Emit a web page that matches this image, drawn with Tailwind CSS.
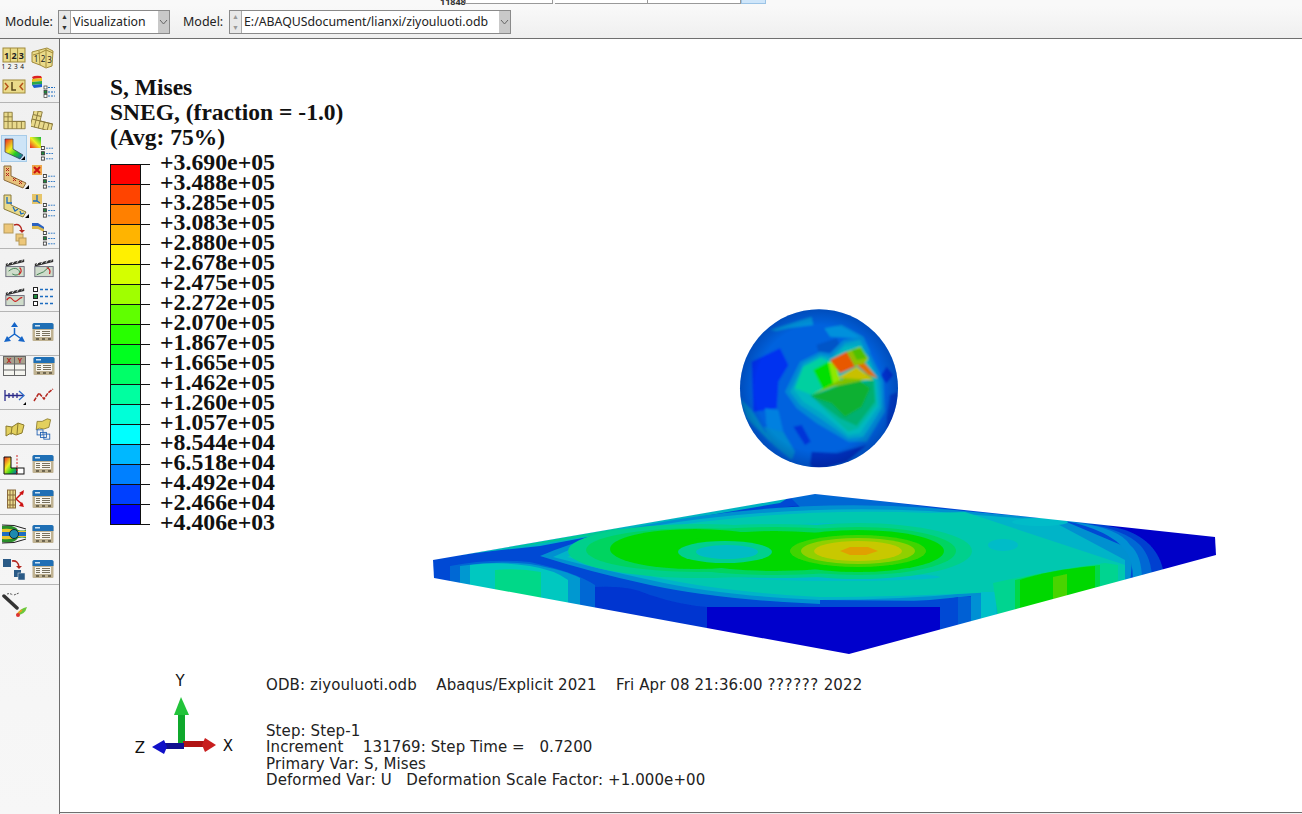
<!DOCTYPE html>
<html lang="en">
<head>
  <meta charset="UTF-8">
  <title>Abaqus/CAE Visualization</title>
  <script src="https://cdn.jsdelivr.net/npm/@tailwindcss/browser@4"></script>
</head>
<body class="w-[1302px] h-[814px] overflow-hidden bg-[#f0f0f0] flex flex-col font-['Noto_Sans',sans-serif]">

  <!-- shared icons -->
  <svg class="hidden">
    <symbol id="table" viewBox="0 2 22 18">
      <rect x="0.5" y="3" width="21" height="17" rx="1" fill="#bfb292"/>
      <path d="M0.5 8V3.5q0-1.500 1.500-1.500h18q1.500 0 1.500 1.500V8z" fill="#1f6fb5"/>
      <rect x="3" y="4" width="5" height="1.500" fill="#cfe3f3"/>
      <rect x="3" y="9" width="16" height="7" fill="#f7f5ee"/>
      <path d="M4 10.500h4M10 10.500h8M4 12.500h4M10 12.500h8M4 14.500h4M10 14.500h8" stroke="#77705c"/>
      <path d="M4 18h3M10 18h3M16 18h3" stroke="#6e6650" stroke-width="2"/>
    </symbol>
    <symbol id="list" viewBox="0 0 14 17">
      <rect x="0.500" y="0.500" width="3.500" height="3.500" fill="#fff" stroke="#333"/>
      <rect x="0.500" y="6.500" width="3.500" height="3.500" fill="#1f8a3c" stroke="#333"/>
      <rect x="0.500" y="12.500" width="3.500" height="3.500" fill="#fff" stroke="#333"/>
      <path d="M6 2.500h8M6 8.500h8M6 14.500h8" stroke="#1c6cc0" stroke-dasharray="2 1"/>
    </symbol>
    <symbol id="mesh-l" viewBox="0 0 25 20">
      <path d="M1 1h9v10h14v8H1z" fill="#e9da8c" stroke="#8a7a3c"/>
      <path d="M5.500 1v18M1 6h9M1 11h23M10 11v8M15 11v8M20 11v8" stroke="#8a7a3c" fill="none"/>
    </symbol>
    <symbol id="film" viewBox="0 0 24 22">
      <path d="M2 7l20-5v3L2 10z" fill="#333"/>
      <path d="M4 8l2-3M9 7l2-3M14 6l2-3M19 4l2-2" stroke="#fff"/>
      <rect x="2" y="10" width="20" height="11" fill="#cfdccb" stroke="#667"/>
    </symbol>
  </svg>

  <!-- strip of the window above -->
  <div class="h-[6px] bg-[#f9f9f9] relative overflow-hidden shrink-0">
    <div class="absolute left-[440px] -top-[1px] h-[5px] w-[326px] flex items-end">
      <span class="w-[25px] text-[9px] leading-[5px] font-bold text-[#333]">11848</span>
      <span class="w-[88px] h-[5px] border-x border-b border-[#999] bg-white"></span>
      <span class="w-[2px]"></span>
      <span class="w-[93px] h-[5px] border-r border-b border-[#999] bg-white"></span>
      <span class="w-[93px] h-[5px] border-r border-b border-[#999] bg-white"></span>
      <span class="flex-1 h-[5px] bg-[#cfe6fa] border border-t-0 border-[#9cc4e6]"></span>
    </div>
  </div>

  <!-- module / model bar -->
  <div class="h-[33px] shrink-0 flex items-center pl-[5px] text-[12.500px] text-[#222] bg-gradient-to-b from-[#f9f9f9] to-[#efefef] border-b border-[#6f6f6f]">
    <span class="mr-[5px] w-[48px]">Module:</span>
    <div class="w-[112px] h-[24px] flex items-center bg-white border border-[#8a8a8a] text-[12.300px]">
      <span class="w-[12px] h-full flex flex-col text-[7px] leading-[11px] text-center text-[#333] bg-[#e8e8e8] border-r border-[#aaa]"><i class="not-italic">▲</i><i class="not-italic">▼</i></span>
      <span class="flex-1 pl-[2px]">Visualization</span>
      <span class="w-[11px] h-full bg-[#c9c9c9] flex items-center justify-center">
        <svg width="9" height="6" viewBox="0 0 9 6"><path d="M1 1l3.500 4L8 1" fill="none" stroke="#666"/></svg>
      </span>
    </div>
    <span class="ml-[13px] mr-[4px] w-[42px]">Model:</span>
    <div class="w-[282px] h-[24px] flex items-center bg-white border border-[#8a8a8a] text-[12.300px]">
      <span class="w-[12px] h-full flex flex-col text-[7px] leading-[11px] text-center text-[#999] bg-[#e8e8e8] border-r border-[#aaa]"><i class="not-italic">▲</i><i class="not-italic">▼</i></span>
      <span class="flex-1 pl-[2px]">E:/ABAQUSdocument/lianxi/ziyouluoti.odb</span>
      <span class="w-[11px] h-full bg-[#c9c9c9] flex items-center justify-center">
        <svg width="9" height="6" viewBox="0 0 9 6"><path d="M1 1l3.500 4L8 1" fill="none" stroke="#666"/></svg>
      </span>
    </div>
  </div>

  <div class="flex-1 flex min-h-0">
    <!-- toolbox -->
    <aside class="w-[60px] shrink-0 bg-gradient-to-b from-[#f0f0f0] to-[#f7f7f7] border-r border-[#6f6f6f]">
      <div class="pt-[4px] h-[64px] border-b border-[#b5b5b5]">
        <div class="flex h-[29px] items-center pl-[2px] gap-[5px]">
          <svg width="24" height="22" viewBox="0 0 24 22">
            <rect x="1" y="1" width="22" height="14" fill="#eadb8a" stroke="#a08a3a"/>
            <path d="M8.300 1v14M15.600 1v14" stroke="#a08a3a"/>
            <text x="4.600" y="11.500" font-size="9" font-weight="700" text-anchor="middle" fill="#222">1</text>
            <text x="12" y="11.500" font-size="9" font-weight="700" text-anchor="middle" fill="#222">2</text>
            <text x="19.400" y="11.500" font-size="9" font-weight="700" text-anchor="middle" fill="#222">3</text>
            <text x="12" y="21.500" font-size="6.500" text-anchor="middle" fill="#111" letter-spacing="2.500">1234</text>
          </svg>
          <svg width="23" height="22" viewBox="0 0 23 22">
            <path d="M1 5l15-4 6 3-1 15-6 2-6-3-8-3z" fill="#eadb8a" stroke="#a08a3a"/>
            <path d="M8 4l1 14M15 2l0 18M2 8l7-2 6-3 7 3" stroke="#a08a3a" fill="none"/>
            <text x="5" y="15" font-size="8" text-anchor="middle" fill="#222">1</text>
            <text x="12" y="15" font-size="8" text-anchor="middle" fill="#222">2</text>
            <text x="18.500" y="16" font-size="8" text-anchor="middle" fill="#222">3</text>
          </svg>
        </div>
        <div class="flex h-[29px] items-center pl-[2px] gap-[5px]">
          <svg width="24" height="17" viewBox="0 0 24 17">
            <rect x="1" y="2" width="22" height="13" fill="#eadb8a" stroke="#a08a3a"/>
            <path d="M3 5l3 3.500-3 3.500M21 5l-3 3.500 3 3.500" fill="none" stroke="#b5521c" stroke-width="1.500"/>
            <path d="M10 4v8h4" fill="none" stroke="#5a4a1c" stroke-width="1.500"/>
          </svg>
          <svg width="24" height="23" viewBox="0 0 24 23">
            <path d="M1 2q3-2 9-1l1 2-9 1z" fill="#d22"/>
            <path d="M1 4l10-1v3L1 7z" fill="#e8c020"/>
            <path d="M1 7l10-1v3L1 10z" fill="#2aa84a"/>
            <path d="M1 10l10-1v3L3 13z" fill="#1c5fd0"/>
            <rect x="13" y="11" width="3" height="3" fill="#fff" stroke="#333" stroke-width=".7"/>
            <rect x="13" y="15.500" width="3" height="3" fill="#1f8a3c" stroke="#333" stroke-width=".7"/>
            <rect x="13" y="19.500" width="3" height="3" fill="#fff" stroke="#333" stroke-width=".7"/>
            <path d="M17 12.500h7M17 17h7M17 21h7" stroke="#1c6cc0" stroke-dasharray="2 1"/>
          </svg>
        </div>
      </div>

      <div class="pt-[3px] h-[146px] border-b border-[#b5b5b5]">
        <div class="flex h-[28.500px] items-center pl-[3px] gap-[5px]">
          <svg width="23" height="19" viewBox="0 0 25 20"><use href="#mesh-l"/></svg>
          <svg width="23" height="19" viewBox="0 0 25 20"><g transform="rotate(14 12 10)"><use href="#mesh-l"/></g></svg>
        </div>
        <div class="flex h-[28.500px] items-center pl-[1px] gap-[3px]">
          <div class="w-[26px] h-[27px] bg-[#cde4f7] border border-[#a6cbe8] relative">
            <svg width="24" height="25" viewBox="0 0 24 25">
              <defs><linearGradient id="cont" x1="0" y1="0" x2="1" y2="1"><stop offset="0" stop-color="#e22"/><stop offset=".4" stop-color="#ee2"/><stop offset=".65" stop-color="#2c2"/><stop offset="1" stop-color="#15c"/></linearGradient></defs>
              <path d="M3 3h8v10l10 6-3 4L3 16z" fill="url(#cont)" stroke="#335" stroke-width=".7"/>
            </svg>
            <span class="absolute right-[1px] bottom-[1px] w-0 h-0 border-l-[4px] border-l-transparent border-b-[4px] border-b-black"></span>
          </div>
          <div class="relative w-[24px] h-[24px]">
            <svg class="absolute left-0 top-0" width="11" height="11" viewBox="0 0 11 11">
              <defs><linearGradient id="cont2" x1="0" y1="1" x2="1" y2="0"><stop offset="0" stop-color="#e22"/><stop offset=".5" stop-color="#ee2"/><stop offset="1" stop-color="#1b3"/></linearGradient></defs>
              <rect width="11" height="11" fill="url(#cont2)"/>
            </svg>
            <svg class="absolute left-[10px] top-[9px]" width="14" height="15" viewBox="0 0 14 17"><use href="#list"/></svg>
          </div>
        </div>
        <div class="flex h-[28.500px] items-center pl-[3px] gap-[3px]">
          <div class="relative w-[26px] h-[24px]">
            <svg width="26" height="24" viewBox="0 0 26 24">
              <path d="M1 1h7v10l15 7-3 5L1 15z" fill="#e7c27c" stroke="#8a6a3c"/>
              <path d="M3 3l3 3M6 3L3 6M3 8l3 3M6 8l-3 3M10 13l3 3M13 13l-3 3M16 16l3 3M19 16l-3 3" stroke="#b3261e"/>
            </svg>
            <span class="absolute right-0 bottom-0 w-0 h-0 border-l-[4px] border-l-transparent border-b-[4px] border-b-black"></span>
          </div>
          <div class="relative w-[24px] h-[24px]">
            <svg class="absolute left-0 top-0" width="10" height="10" viewBox="0 0 10 10"><rect width="10" height="10" fill="#eda64a"/><path d="M2 2l6 6M8 2L2 8" stroke="#c11" stroke-width="2"/></svg>
            <svg class="absolute left-[10px] top-[9px]" width="14" height="15" viewBox="0 0 14 17"><use href="#list"/></svg>
          </div>
        </div>
        <div class="flex h-[28.500px] items-center pl-[3px] gap-[3px]">
          <div class="relative w-[26px] h-[24px]">
            <svg width="26" height="24" viewBox="0 0 26 24">
              <path d="M1 1h7v10l15 7-3 5L1 15z" fill="#e9da8c" stroke="#8a7a3c"/>
              <path d="M4 3v6h5M10 13l2 4 3-2M17 17l1 3 3-1" fill="none" stroke="#1c6cc0" stroke-width="1.300"/>
            </svg>
            <span class="absolute right-0 bottom-0 w-0 h-0 border-l-[4px] border-l-transparent border-b-[4px] border-b-black"></span>
          </div>
          <div class="relative w-[24px] h-[24px]">
            <svg class="absolute left-0 top-0" width="10" height="10" viewBox="0 0 10 10"><rect width="10" height="10" fill="#e6c56a"/><path d="M5 1v6H1M5 7l3 2" fill="none" stroke="#1c6cc0" stroke-width="1.300"/></svg>
            <svg class="absolute left-[10px] top-[9px]" width="14" height="15" viewBox="0 0 14 17"><use href="#list"/></svg>
          </div>
        </div>
        <div class="flex h-[28.500px] items-center pl-[3px] gap-[3px]">
          <svg width="26" height="24" viewBox="0 0 26 24">
            <rect x="1" y="2" width="9" height="9" fill="#edc77a" stroke="#b69a5a"/>
            <path d="M11 3q7-2 8 6" fill="none" stroke="#b3261e" stroke-width="1.500"/>
            <path d="M16 8h6l-3 3z" fill="#b3261e"/>
            <rect x="13" y="12" width="7" height="7" fill="#edc77a" stroke="#b69a5a"/>
            <rect x="16" y="16" width="7" height="7" fill="#edc77a" stroke="#b69a5a"/>
          </svg>
          <div class="relative w-[24px] h-[24px]">
            <svg class="absolute left-0 top-[1px]" width="13" height="10" viewBox="0 0 13 10"><path d="M0 0h6l6 4v3l-6-3H0z" fill="#2b62c0"/><path d="M0 3h6l6 3v3l-6-3H0z" fill="#d8b850"/></svg>
            <svg class="absolute left-[10px] top-[9px]" width="14" height="15" viewBox="0 0 14 17"><use href="#list"/></svg>
          </div>
        </div>
      </div>

      <div class="pt-[4px] h-[63px] border-b border-[#b5b5b5]">
        <div class="flex h-[29px] items-center pl-[4px] gap-[7px]">
          <svg width="22" height="21" viewBox="0 0 24 22">
            <use href="#film"/><path d="M5 15q6-5 10-2 4 3 0 6-3 1-6-1" fill="none" stroke="#3a7a4a"/><path d="M17 11q4 4-1 8" fill="none" stroke="#c22" stroke-width="1.300"/>
          </svg>
          <svg width="22" height="21" viewBox="0 0 24 22">
            <use href="#film"/><path d="M4 19q8-2 14-9" fill="none" stroke="#3a7a4a"/><path d="M15 11q5 2 3 7" fill="none" stroke="#c22" stroke-width="1.300"/>
          </svg>
        </div>
        <div class="flex h-[29px] items-center pl-[4px] gap-[7px]">
          <svg width="22" height="21" viewBox="0 0 24 22">
            <use href="#film"/><path d="M3 15q3-5 6-1t6 1 5-3" fill="none" stroke="#c22" stroke-width="1.300"/>
          </svg>
          <svg width="22" height="19" viewBox="0 0 22 19">
            <rect x=".5" y=".5" width="4" height="4" fill="#fff" stroke="#222"/>
            <rect x=".5" y="7.500" width="4" height="4" fill="#1f8a3c" stroke="#222"/>
            <rect x=".5" y="14.500" width="4" height="4" fill="#fff" stroke="#222"/>
            <path d="M7 2.500h15M7 9.500h15M7 16.500h15" stroke="#1c6cc0" stroke-width="1.500" stroke-dasharray="3 2"/>
          </svg>
        </div>
      </div>

      <div class="pt-[5px] h-[44px] border-b border-[#b5b5b5]">
        <div class="flex h-[29px] items-center pl-[4px] gap-[7px]">
          <svg width="21" height="21" viewBox="0 0 21 21" fill="#1565c8">
            <path d="M10.500 7v6M10.500 13l-7 5M10.500 13l7 5" stroke="#1565c8" stroke-width="1.500"/>
            <path d="M10.500 1l3.500 5h-7zM0 21l3-6 4 5zM21 21l-3-6-4 5z"/>
          </svg>
          <svg width="22" height="18"><use href="#table"/></svg>
        </div>
      </div>

      <div class="h-[54px] border-b border-[#b5b5b5]">
        <div class="flex h-[20px] items-center pl-[3px] gap-[7px]">
          <svg width="23" height="20" viewBox="0 0 23 20">
            <rect x=".5" y=".5" width="22" height="19" fill="#f5f5f0" stroke="#666"/>
            <rect x="1" y="1" width="21" height="7" fill="#a9a28e"/>
            <path d="M.5 8h22M.5 14h22M11.500 .5v19" stroke="#666"/>
            <text x="6" y="7" font-size="7" font-weight="700" text-anchor="middle" fill="#b3261e">X</text>
            <text x="17" y="7" font-size="7" font-weight="700" text-anchor="middle" fill="#b3261e">Y</text>
          </svg>
          <svg width="22" height="18"><use href="#table"/></svg>
        </div>
        <div class="flex h-[20px] mt-[9px] items-center pl-[4px] gap-[8px] relative">
          <svg width="21" height="13" viewBox="0 0 21 13">
            <path d="M1 1v11M1 6.500h18M5 4v5M9 4v5M13 4v5" stroke="#2a2a8a" fill="none" stroke-width="1.300"/>
            <path d="M15 2l5 4.500-5 4.500" fill="none" stroke="#2a6ac8" stroke-width="1.300"/>
          </svg>
          <svg width="21" height="15" viewBox="0 0 21 15">
            <path d="M1 13l5-8 5 6 4-6 5-4" fill="none" stroke="#b3261e" stroke-width="1.500" stroke-dasharray="4 1"/>
          </svg>
          <span class="absolute left-[23px] bottom-0 w-0 h-0 border-l-[3px] border-l-transparent border-b-[3px] border-b-black"></span>
        </div>
      </div>

      <div class="pt-[8px] h-[35px] border-b border-[#b5b5b5]">
        <div class="flex h-[22px] items-center pl-[5px] gap-[8px]">
          <svg width="20" height="15" viewBox="0 0 20 15"><path d="M1 4l6 1 6-4 6 2-2 8-6 2-5-2-5 3z" fill="#e3d05e" stroke="#8a7a2c"/><path d="M7 5l-1 8M13 1l-1 11" stroke="#8a7a2c"/></svg>
          <svg width="20" height="22" viewBox="0 0 20 26"><path d="M3 4l6 0 6-3 4 1-2 9-6 2-5-1-4 2z" fill="#e3d05e" stroke="#8a7a2c"/><rect x="3" y="14" width="7" height="6" fill="none" stroke="#1c5cb0"/><rect x="7" y="17" width="7" height="6" fill="none" stroke="#1c5cb0"/><rect x="11" y="19" width="7" height="6" fill="none" stroke="#1c5cb0"/></svg>
        </div>
      </div>

      <div class="h-[35px] pt-[4px] border-b border-[#b5b5b5] flex items-center pl-[3px] gap-[7px]">
        <svg width="22" height="21" viewBox="0 0 22 21">
          <defs><linearGradient id="cont3" x1="0" y1="0" x2="1" y2="1"><stop offset="0" stop-color="#e22"/><stop offset=".4" stop-color="#ee2"/><stop offset=".7" stop-color="#2c2"/><stop offset="1" stop-color="#15c"/></linearGradient></defs>
          <path d="M1 3h7v11h6v6H1z" fill="url(#cont3)" stroke="#111"/>
          <rect x="14" y="14" width="7" height="6" fill="#fff" stroke="#111"/>
          <path d="M14 1v19" stroke="#c22" stroke-dasharray="2 1.500"/>
        </svg>
        <svg width="22" height="18"><use href="#table"/></svg>
      </div>

      <div class="h-[35px] pt-[4px] border-b border-[#b5b5b5] flex items-center pl-[7px] gap-[7px]">
        <svg width="18" height="20" viewBox="0 0 18 20">
          <rect x="0.500" y="1" width="8" height="18" fill="#e9da8c" stroke="#8a6a3c"/>
          <path d="M3 1v18M6 1v18M.5 6h8M.5 11h8M.5 16h8" stroke="#8a6a3c"/>
          <path d="M9 10l7-7M9 10l7 6" stroke="#c11" stroke-width="1.500"/>
          <path d="M17 1l-1 5-4-2zM17 18l-5-1 3-4z" fill="#c11"/>
        </svg>
        <svg width="22" height="18"><use href="#table"/></svg>
      </div>

      <div class="h-[35px] pt-[4px] border-b border-[#b5b5b5] flex items-center pl-[2px] gap-[6px]">
        <svg width="24" height="20" viewBox="0 0 24 20">
          <path d="M0 2q12-2 16 4 4 1 8 0v8q-4-1-8 0-4 6-16 4z" fill="#2a8f2a"/>
          <path d="M0 5q10-1 14 2h10v6H14q-4 3-14 2z" fill="#e6c52e"/>
          <path d="M0 8h14v4H0zM14 8h10v4H14z" fill="#1c6cc0"/>
          <circle cx="12" cy="10" r="4.500" fill="#1c8ab0" stroke="#123"/>
          <path d="M0 1q12-1 24 4M0 19q12 1 24-4" fill="none" stroke="#222"/>
        </svg>
        <svg width="22" height="18"><use href="#table"/></svg>
      </div>

      <div class="h-[35px] pt-[4px] border-b border-[#b5b5b5] flex items-center pl-[2px] gap-[6px]">
        <svg width="24" height="22" viewBox="0 0 24 22">
          <rect x="1" y="1" width="8" height="8" fill="#2a5a86"/>
          <path d="M10 3q6-1 7 6" fill="none" stroke="#b3261e" stroke-width="1.500"/>
          <path d="M14 8h6l-3 3z" fill="#b3261e"/>
          <rect x="12" y="12" width="7" height="7" fill="#2a5a86"/>
          <rect x="16" y="15" width="7" height="7" fill="#2a5a86" stroke="#eee" stroke-width=".5"/>
        </svg>
        <svg width="22" height="18"><use href="#table"/></svg>
      </div>

      <div class="pt-[7px] pl-[2px]">
        <svg width="26" height="28" viewBox="0 0 26 28">
          <path d="M2 4l13 12" stroke="#333" stroke-width="3.500" stroke-linecap="round"/>
          <path d="M5 2q3-1 6 1M12 3l5-2" stroke="#555" fill="none" stroke-dasharray="2 1"/>
          <path d="M15 23q3-7 10-8-2 8-10 8z" fill="#6cc83c"/>
          <path d="M15 23q2-3 5-5" stroke="#e8a020" stroke-width="2"/>
          <circle cx="16" cy="23" r="2" fill="#d33"/>
        </svg>
      </div>
    </aside>

    <!-- viewport -->
    <main class="flex-1 relative bg-white border-b border-[#6f6f6f] mb-[1px] overflow-hidden">

      <!-- legend -->
      <div class="absolute left-[50px] top-[36px] font-['Liberation_Serif',serif] font-bold text-[#111]">
        <div class="text-[23.500px] leading-[25px]">
          <p>S, Mises</p>
          <p>SNEG, (fraction = -1.0)</p>
          <p>(Avg: 75%)</p>
        </div>
        <div class="flex mt-[2px]">
          <div class="w-[40px] mt-[12px] shrink-0">
            <div class="h-[20px] border-t border-[#111]"><div class="h-full w-[31px] border-x border-[#111] bg-[#ff0000]"></div></div>
            <div class="h-[20px] border-t border-[#111]"><div class="h-full w-[31px] border-x border-[#111] bg-[#ff4400]"></div></div>
            <div class="h-[20px] border-t border-[#111]"><div class="h-full w-[31px] border-x border-[#111] bg-[#ff8000]"></div></div>
            <div class="h-[20px] border-t border-[#111]"><div class="h-full w-[31px] border-x border-[#111] bg-[#ffb400]"></div></div>
            <div class="h-[20px] border-t border-[#111]"><div class="h-full w-[31px] border-x border-[#111] bg-[#fff000]"></div></div>
            <div class="h-[20px] border-t border-[#111]"><div class="h-full w-[31px] border-x border-[#111] bg-[#d4ff00]"></div></div>
            <div class="h-[20px] border-t border-[#111]"><div class="h-full w-[31px] border-x border-[#111] bg-[#a0ff00]"></div></div>
            <div class="h-[20px] border-t border-[#111]"><div class="h-full w-[31px] border-x border-[#111] bg-[#60ff00]"></div></div>
            <div class="h-[20px] border-t border-[#111]"><div class="h-full w-[31px] border-x border-[#111] bg-[#28ff00]"></div></div>
            <div class="h-[20px] border-t border-[#111]"><div class="h-full w-[31px] border-x border-[#111] bg-[#00ff20]"></div></div>
            <div class="h-[20px] border-t border-[#111]"><div class="h-full w-[31px] border-x border-[#111] bg-[#00ff68]"></div></div>
            <div class="h-[20px] border-t border-[#111]"><div class="h-full w-[31px] border-x border-[#111] bg-[#00ffa0]"></div></div>
            <div class="h-[20px] border-t border-[#111]"><div class="h-full w-[31px] border-x border-[#111] bg-[#00ffd8]"></div></div>
            <div class="h-[20px] border-t border-[#111]"><div class="h-full w-[31px] border-x border-[#111] bg-[#00ffff]"></div></div>
            <div class="h-[20px] border-t border-[#111]"><div class="h-full w-[31px] border-x border-[#111] bg-[#00b8ff]"></div></div>
            <div class="h-[20px] border-t border-[#111]"><div class="h-full w-[31px] border-x border-[#111] bg-[#0080ff]"></div></div>
            <div class="h-[20px] border-t border-[#111]"><div class="h-full w-[31px] border-x border-[#111] bg-[#0040ff]"></div></div>
            <div class="h-[20px] border-t border-[#111]"><div class="h-full w-[31px] border-x border-[#111] bg-[#0000ff]"></div></div>
            <div class="h-[1px] bg-[#111]"></div>
          </div>
          <div class="ml-[10px] text-[23.800px] leading-[20px]">
            <p>+3.690e+05</p><p>+3.488e+05</p><p>+3.285e+05</p><p>+3.083e+05</p><p>+2.880e+05</p>
            <p>+2.678e+05</p><p>+2.475e+05</p><p>+2.272e+05</p><p>+2.070e+05</p><p>+1.867e+05</p>
            <p>+1.665e+05</p><p>+1.462e+05</p><p>+1.260e+05</p><p>+1.057e+05</p><p>+8.544e+04</p>
            <p>+6.518e+04</p><p>+4.492e+04</p><p>+2.466e+04</p><p>+4.406e+03</p>
          </div>
        </div>
      </div>

      <!-- model -->
      <svg class="absolute left-0 top-0" width="1242" height="775" viewBox="60 39 1242 775">
        <defs>
          <clipPath id="plate"><path d="M433 560L815 494 1215 537 1216 555 849 654 434 578z"/></clipPath>
          <clipPath id="ball"><circle cx="297" cy="280" r="237"/></clipPath>
          <filter id="soft" x="-5%" y="-5%" width="110%" height="110%"><feGaussianBlur stdDeviation=".7"/></filter>
          <filter id="softball" x="-5%" y="-5%" width="110%" height="110%"><feGaussianBlur stdDeviation="2.500"/></filter>
          <radialGradient id="rim" cx=".5" cy=".5" r=".5"><stop offset=".8" stop-color="#000040" stop-opacity="0"/><stop offset="1" stop-color="#000040" stop-opacity=".22"/></radialGradient>
        </defs>

        <g clip-path="url(#plate)">
          <g filter="url(#soft)">
          <rect x="420" y="480" width="810" height="190" fill="#0048d4"/>
          <!-- back edge -->
          <path d="M455 556L788 498 780 503Q650 525 540 546 480 552 455 556z" fill="#00b4c0"/>
          <path d="M490 551L620 528 615 532 530 545z" fill="#00c890"/>
          <path d="M620 538Q720 512 825 503L830 506Q730 515 640 536z" fill="#0034c8"/>
          <path d="M790 497L815 494 880 501 960 511 930 510Q870 505 800 507z" fill="#0068d4"/>
          <!-- field -->
          <path d="M540 556Q600 530 700 516 815 500 930 508 1020 516 1062 520L1133 550 1130 585 980 625 971 596Q900 604 820 604 720 600 650 585 590 572 540 556z" fill="#0090d0"/>
          <path d="M553 557Q610 530 700 519 815 505 930 511 1010 518 1050 520L1125 560V590L1000 623 981 592Q900 600 820 600 720 596 650 580 595 568 553 557z" fill="#00b4c8"/>
          <path d="M567 557Q620 533 700 522 815 508 930 513L965 512 1125 565V590L1000 620 996 592Q900 597 820 597 720 592 650 576 600 566 567 557z" fill="#00c8b0"/>
          <ellipse cx="830" cy="528" rx="52" ry="5" fill="#00bcc8"/>
          <ellipse cx="840" cy="577" rx="100" ry="4" fill="#00bcc8"/>
          <ellipse cx="1040" cy="522" rx="28" ry="4" fill="#00bcc8"/>
          <!-- green blob, both lobes run together -->
          <ellipse cx="700" cy="551" rx="132" ry="27" fill="#00d08c"/>
          <ellipse cx="858" cy="551" rx="114" ry="28" fill="#00d08c"/>
          <ellipse cx="775" cy="551" rx="160" ry="27" fill="#00d08c"/>
          <ellipse cx="698" cy="550" rx="112" ry="22" fill="#00d460"/>
          <ellipse cx="858" cy="551" rx="98" ry="24" fill="#00d460"/>
          <ellipse cx="775" cy="551" rx="130" ry="24" fill="#00d460"/>
          <ellipse cx="695" cy="549" rx="85" ry="20" fill="#00d800"/>
          <ellipse cx="858" cy="551" rx="86" ry="21" fill="#00d800"/>
          <ellipse cx="775" cy="551" rx="100" ry="20" fill="#00d800"/>
          <ellipse cx="725" cy="552" rx="47" ry="11" fill="#00d08c"/>
          <ellipse cx="727" cy="552" rx="31" ry="7" fill="#00bcc4"/>
          <!-- hot spot -->
          <ellipse cx="858" cy="551" rx="68" ry="16" fill="#40d400"/>
          <ellipse cx="858" cy="551" rx="57" ry="13" fill="#90d000"/>
          <ellipse cx="858" cy="551" rx="44" ry="10" fill="#c8c800"/>
          <path d="M840 551L850 547 868 547 878 551 866 555 850 555z" fill="#e0a000"/>
          <ellipse cx="1003" cy="545" rx="15" ry="6" fill="#00bcc8"/>
          <!-- left near edge -->
          <path d="M450 566Q490 558 530 562 575 572 595 585V620H450z" fill="#0068d4"/>
          <path d="M460 566Q495 560 530 564 565 570 580 578V620H460z" fill="#0098d0"/>
          <path d="M470 565Q500 561 530 566 555 570 568 580V620H470z" fill="#00c8c0"/>
          <path d="M495 570Q520 568 541 572V620H495z" fill="#00d888"/>
          <path d="M595 587Q630 585 650 595 680 605 707 607V640H595z" fill="#0034d0"/>
          <!-- near dark block -->
          <path d="M707 607H820V600L940 601 958 597V640L849 660 707 640z" fill="#0048d4"/>
          <path d="M707 607H940V640L849 660 707 640z" fill="#0000cc"/>
          <!-- right near edge -->
          <path d="M958 597H971V630H958z" fill="#0060d4"/>
          <path d="M971 596H981V625H971z" fill="#0090d4"/>
          <path d="M981 592H996V620H981z" fill="#00c0c8"/>
          <path d="M993 583Q1050 570 1105 563L1118 565V600L1000 630z" fill="#00d490"/>
          <path d="M1015 580Q1060 568 1100 565V600L1015 625z" fill="#00d848"/>
          <path d="M1020 580Q1050 570 1095 566V610L1020 625z" fill="#00d800"/>
          <path d="M1053 577L1067 574V600H1053z" fill="#48d400"/>
          <!-- right corner bands -->
          <path d="M1062 520Q1110 530 1125 550 1133 560 1133 580H1230V510z" fill="#0090d4"/>
          <path d="M1073 522Q1120 528 1130 545 1142 555 1142 580H1230V510z" fill="#0068d4"/>
          <path d="M1088 524Q1125 530 1140 545 1152 558 1152 580H1230V510z" fill="#0040d0"/>
          <path d="M1108 526Q1135 530 1150 545 1164 560 1164 580H1230V510z" fill="#0000c8"/>
          </g>
        </g>

        <g transform="translate(720 295) scale(.33333)">
          <g clip-path="url(#ball)">
            <g filter="url(#softball)">
            <rect x="40" y="20" width="520" height="520" fill="#0062de"/>
            <path d="M150 105L275 65 280 90 205 100 170 108z" fill="#0094dc"/>
            <path d="M313 100L365 90 430 125 450 170 430 190 400 130 330 125z" fill="#0090dc"/>
            <path d="M95 200L180 160 205 210 175 260 170 340 100 350z" fill="#0030f0"/>
            <path d="M60 310L95 345 135 410 225 490 150 440 80 370z" fill="#0090d0"/>
            <path d="M135 340L175 345 190 410 140 400z" fill="#0080e0"/>
            <path d="M130 395L190 410 225 470 215 495 160 450z" fill="#0088d0"/>
            <path d="M275 470L350 475 440 450 380 500 290 525 270 510z" fill="#0030c0"/>
            <path d="M510 300L535 290 530 350 500 420 500 370z" fill="#0040cc"/>
            <path d="M290 150L350 130 370 170 330 190 295 170z" fill="#0054c8"/>
            <path d="M480 245L500 215 520 240 500 265z" fill="#0030d0"/>
            <path d="M195 290L240 200 300 170 330 175 370 135 425 125 455 185 490 255 495 350 440 440 385 440 290 385 230 340z" fill="#0088d4"/>
            <path d="M210 290L250 205 300 180 335 185 375 145 420 135 445 185 480 260 485 340 430 425 385 430 300 370 240 330z" fill="#00a4c8"/>
            <path d="M222 285L250 215 305 185 330 195 375 155 425 150 445 195 470 260 475 335 420 415 385 420 305 355 250 320z" fill="#00b8c0"/>
            <path d="M220 395L245 390 272 440 255 450z" fill="#0034d8"/>
            <path d="M270 300L465 255 470 330 415 400 385 410 320 350z" fill="#00b8a0"/>
            <path d="M270 300L460 255 465 320 410 392 360 370 320 340z" fill="#00b070"/>
            <path d="M275 305L410 250 450 280 425 335 375 365 335 325z" fill="#10b030"/>
            <path d="M225 280L250 215 300 190 330 200 360 270 275 300z" fill="#00d0a0"/>
            <path d="M280 225L325 200 360 265 310 285z" fill="#00e000"/>
            <path d="M325 200L345 205 362 258 340 270z" fill="#90e800"/>
            <path d="M275 300L350 260 420 225 460 250 340 275z" fill="#80c000"/>
            <path d="M350 250L410 215 440 240 460 255 380 250z" fill="#c8c000"/>
            <path d="M380 170L420 155 445 190 435 205 405 215z" fill="#90c000"/>
            <path d="M395 165L425 160 440 190 410 195z" fill="#50c000"/>
            <path d="M330 195L380 170 405 215 360 235z" fill="#e85800"/>
            <path d="M410 210L435 205 473 250 445 240z" fill="#e07000"/>
            </g>
          </g>
          <circle cx="297" cy="280" r="237" fill="url(#rim)"/>
        </g>
      </svg>

      <!-- triad -->
      <svg class="absolute left-[70px] top-[630px]" width="120" height="90" viewBox="130 669 120 90">
        <path d="M178 713h7v30h-7z" fill="#0fa82c"/>
        <path d="M181 697l8 18h-15z" fill="#22c33a"/>
        <path d="M183 741h22v6h-22z" fill="#b01414"/>
        <path d="M216 745l-11 7-3-7 3-7z" fill="#c81e1e"/>
        <path d="M163 743h21v6h-21z" fill="#101090"/>
        <path d="M152 747l12-7 3 7-3 7z" fill="#1010c8"/>
        <text x="180" y="686" font-size="15" text-anchor="middle" fill="#111" font-family="DejaVu Sans">Y</text>
        <text x="228" y="751" font-size="15" text-anchor="middle" fill="#111" font-family="DejaVu Sans">X</text>
        <text x="140" y="753" font-size="15" text-anchor="middle" fill="#111" font-family="DejaVu Sans">Z</text>
      </svg>

      <!-- title block -->
      <div class="absolute left-[206px] top-[638px] font-['DejaVu_Sans',sans-serif] text-[15px] leading-[16.500px] tracking-[0.1px] text-[#222]">
        <p class="mb-[29px] whitespace-pre">ODB: ziyouluoti.odb    Abaqus/Explicit 2021    Fri Apr 08 21:36:00 <span class="tracking-[0.600px]">??????</span> 2022</p>
        <p class="whitespace-pre">Step: Step-1</p>
        <p class="whitespace-pre">Increment    131769: Step Time =   0.7200</p>
        <p class="whitespace-pre">Primary Var: S, Mises</p>
        <p class="whitespace-pre">Deformed Var: U   Deformation Scale Factor: +1.000e+00</p>
      </div>
    </main>
  </div>
</body>
</html>
